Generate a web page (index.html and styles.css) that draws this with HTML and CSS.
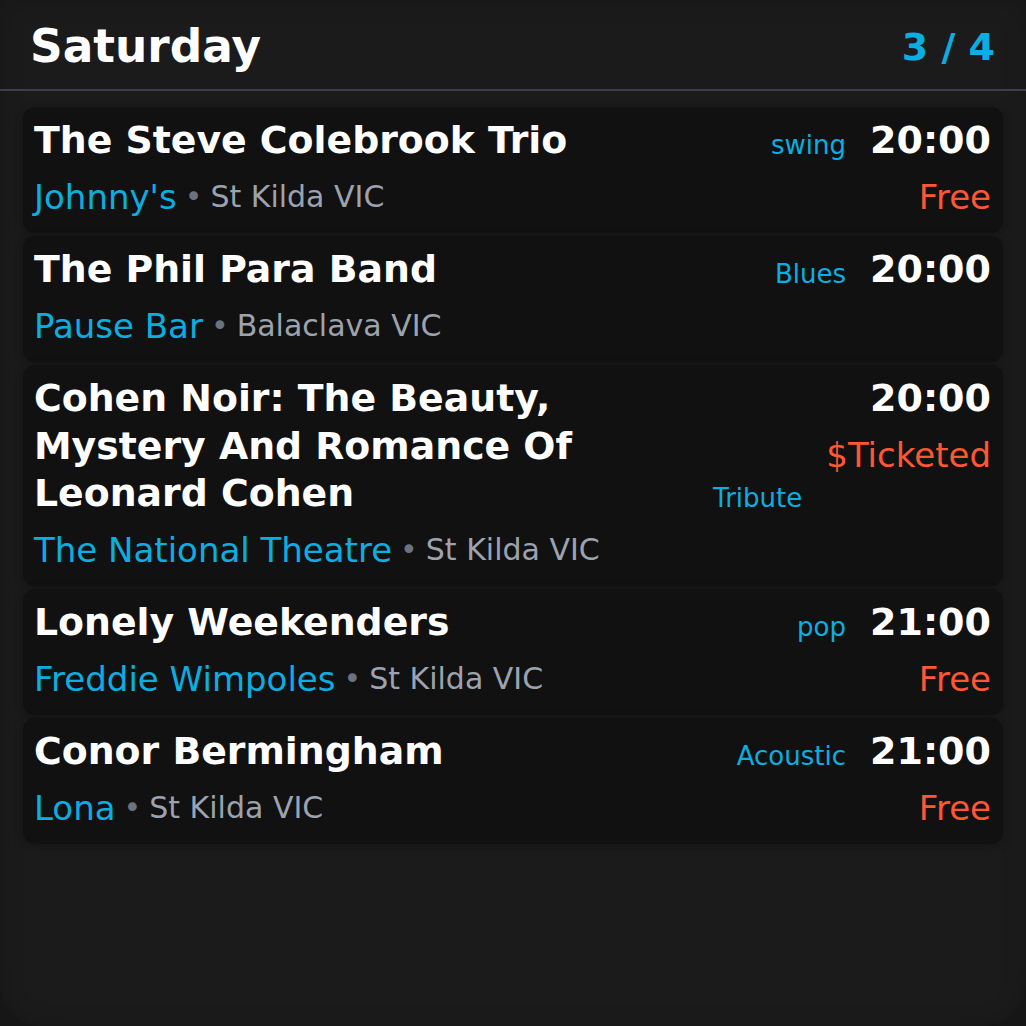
FILE: index.html
```html
<!DOCTYPE html>
<html lang="en">
<head>
<meta charset="utf-8">
<title>Saturday</title>
<link rel="stylesheet" href="styles.css">
</head>
<body>
<div class="app">
  <header class="hdr">
    <h1 class="day">Saturday</h1>
    <div class="page">3 / 4</div>
  </header>
  <main class="list">
    <article class="card">
      <div class="main">
        <div class="top"><h2 class="title">The Steve Colebrook Trio</h2><span class="genre">swing</span></div>
        <div class="venue"><span class="vname">Johnny's</span><span class="dot">•</span><span class="sub">St Kilda VIC</span></div>
      </div>
      <div class="side"><div class="time">20:00</div><div class="price">Free</div></div>
    </article>
    <article class="card">
      <div class="main">
        <div class="top"><h2 class="title">The Phil Para Band</h2><span class="genre">Blues</span></div>
        <div class="venue"><span class="vname">Pause Bar</span><span class="dot">•</span><span class="sub">Balaclava VIC</span></div>
      </div>
      <div class="side"><div class="time">20:00</div></div>
    </article>
    <article class="card">
      <div class="main">
        <div class="top"><h2 class="title">Cohen Noir: The Beauty, Mystery And Romance Of Leonard Cohen</h2><span class="genre">Tribute</span></div>
        <div class="venue"><span class="vname">The National Theatre</span><span class="dot">•</span><span class="sub">St Kilda VIC</span></div>
      </div>
      <div class="side"><div class="time">20:00</div><div class="price">$Ticketed</div></div>
    </article>
    <article class="card">
      <div class="main">
        <div class="top"><h2 class="title">Lonely Weekenders</h2><span class="genre">pop</span></div>
        <div class="venue"><span class="vname">Freddie Wimpoles</span><span class="dot">•</span><span class="sub">St Kilda VIC</span></div>
      </div>
      <div class="side"><div class="time">21:00</div><div class="price">Free</div></div>
    </article>
    <article class="card">
      <div class="main">
        <div class="top"><h2 class="title">Conor Bermingham</h2><span class="genre">Acoustic</span></div>
        <div class="venue"><span class="vname">Lona</span><span class="dot">•</span><span class="sub">St Kilda VIC</span></div>
      </div>
      <div class="side"><div class="time">21:00</div><div class="price">Free</div></div>
    </article>
  </main>
</div>
</body>
</html>
```
FILE: styles.css
```css
html, body {
  margin: 0;
  padding: 0;
  background: #161616;
}
body {
  font-family: "DejaVu Sans", "Liberation Sans", sans-serif;
  color: #fff;
}
.app {
  width: 1026px;
  height: 1026px;
  box-sizing: border-box;
  background: #1b1b1b;
  border-radius: 0 0 40px 40px;
  box-shadow: inset 0 0 24px rgba(0, 0, 0, 0.18);
  overflow: hidden;
}
.hdr {
  height: 91px;
  box-sizing: border-box;
  padding: 4px 31px 0 30px;
  display: flex;
  align-items: center;
  justify-content: space-between;
  border-bottom: 2px solid #3a3f4a;
}
.day {
  margin: 0;
  font-size: 45.4px;
  font-weight: bold;
  color: #fff;
}
.page {
  font-size: 38px;
  font-weight: bold;
  color: #0aaee0;
}
.list {
  padding: 16px 23px 0;
  display: flex;
  flex-direction: column;
  gap: 3.5px;
}
.card {
  background: #111111;
  border-radius: 12px;
  padding: 10px 12px 14px 11px;
  display: flex;
  gap: 24px;
  box-shadow: 0 2px 10px rgba(0, 0, 0, 0.25);
}
.main {
  flex: 1;
  min-width: 0;
}
.top {
  display: flex;
  align-items: flex-end;
  gap: 16px;
}
.title {
  flex: 1;
  margin: 0;
  font-size: 37.8px;
  line-height: 47.5px;
  font-weight: bold;
  color: #fff;
}
.genre {
  font-size: 26px;
  line-height: 39px;
  color: #0aaee0;
  white-space: nowrap;
}
.venue {
  margin-top: 10px;
  height: 44px;
  display: flex;
  align-items: center;
}
.vname {
  font-size: 34px;
  line-height: 44px;
  color: #0aaee0;
}
.dot {
  font-size: 30px;
  color: #6b7280;
  margin: 0 8px 0 8px;
}
.sub {
  font-size: 30px;
  color: #9ca3af;
}
.side {
  display: flex;
  flex-direction: column;
  align-items: flex-end;
}
.time {
  font-size: 38px;
  line-height: 47.5px;
  font-weight: bold;
  color: #fff;
}
.price {
  margin-top: 10px;
  font-size: 34px;
  line-height: 44px;
  color: #ff5733;
}
```
